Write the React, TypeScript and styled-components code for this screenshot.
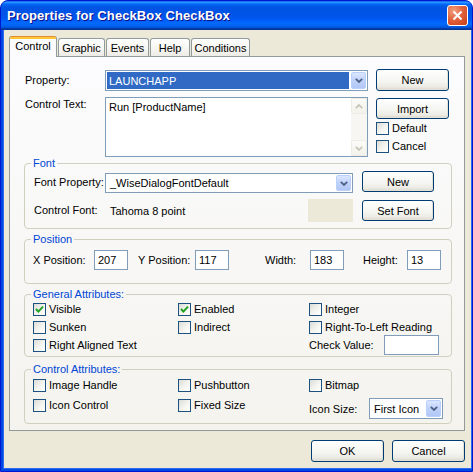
import React from 'react';
import styled, { createGlobalStyle } from 'styled-components';

const GlobalStyle = createGlobalStyle`
  html, body {
    margin: 0;
    padding: 0;
    background: #ffffff;
  }
  body {
    font-family: "Liberation Sans", Arial, sans-serif;
    font-size: 11px;
    color: #000000;
  }
  * {
    box-sizing: border-box;
  }
`;

const Window = styled.div`
  width: 473px;
  height: 472px;
  display: flex;
  flex-direction: column;
  background: #0047e5;
  border: 1px solid #0019cf;
  border-radius: 8px 8px 0 0;
  overflow: hidden;
`;

const TitleBar = styled.div`
  height: 29px;
  flex: none;
  display: flex;
  align-items: center;
  justify-content: space-between;
  padding: 0 4px 0 6px;
  background: linear-gradient(
    180deg,
    #0058ee 0%,
    #3593ff 4%,
    #288eff 6%,
    #127dff 8%,
    #036ffc 10%,
    #0262ee 14%,
    #0057e5 20%,
    #0054e3 24%,
    #0055eb 56%,
    #005bf5 66%,
    #026afe 76%,
    #0062ef 86%,
    #0052d6 92%,
    #0040ab 94%,
    #003092 100%
  );
`;

const TitleText = styled.span`
  font-family: "Liberation Sans", Arial, sans-serif;
  font-weight: bold;
  font-size: 13px;
  color: #ffffff;
  text-shadow: 1px 1px 0 #0f1089;
  letter-spacing: 0.1px;
`;

const CloseButton = styled.div`
  width: 21px;
  height: 21px;
  border: 1px solid #ffffff;
  border-radius: 3px;
  display: flex;
  align-items: center;
  justify-content: center;
  background: radial-gradient(circle at 30% 25%, #f0a080 0%, #e2643e 45%, #c63d15 100%);
`;

const Frame = styled.div`
  flex: 1;
  display: flex;
  padding: 0 2px 2px;
`;

const Client = styled.div`
  flex: 1;
  display: flex;
  flex-direction: column;
  background: #ece9d8;
  border: 1px solid #2a6dee;
  border-top: none;
  padding: 6px 6px 0 5px;
`;

const TabStrip = styled.div`
  display: flex;
  align-items: flex-end;
  gap: 1px;
  height: 21px;
  margin-bottom: -1px;
  position: relative;
  z-index: 1;
`;

const Tab = styled.div<{ $active?: boolean; $w: number }>`
  width: ${({ $w }) => $w}px;
  height: ${({ $active }) => ($active ? 21 : 18)}px;
  margin-bottom: ${({ $active }) => ($active ? 0 : 1)}px;
  display: flex;
  align-items: center;
  justify-content: center;
  padding-top: ${({ $active }) => ($active ? 1 : 0)}px;
  padding-bottom: ${({ $active }) => ($active ? 2 : 0)}px;
  border: 1px solid #919b9c;
  border-top: ${({ $active }) => ($active ? 'none' : '1px solid #919b9c')};
  border-bottom: none;
  border-radius: 3px 3px 0 0;
  background: ${({ $active }) =>
    $active
      ? 'linear-gradient(180deg, #e68b2c 0, #e68b2c 1px, #ffc83c 1px, #ffc83c 3px, #fcfcfe 3px)'
      : 'linear-gradient(180deg, #ffffff 0%, #f7f6f2 55%, #ecebe5 100%)'};
`;

const Panel = styled.div`
  display: flex;
  flex-direction: column;
  border: 1px solid #919b9c;
  background: linear-gradient(180deg, #fcfcfe 0%, #f4f3ee 100%);
  padding: 12px 12px 6px 14px;
`;

const TopGrid = styled.div`
  display: grid;
  grid-template-columns: 73px 263px 73px;
  grid-template-rows: 22px 60px;
  column-gap: 8px;
  row-gap: 6px;
`;

const FieldLabel = styled.div<{ $top?: boolean }>`
  padding-left: 1px;
  line-height: 13px;
  align-self: ${({ $top }) => ($top ? 'start' : 'center')};
  padding-top: ${({ $top }) => ($top ? 1 : 0)}px;
  white-space: nowrap;
`;

const Combo = styled.div<{ $h?: number }>`
  height: ${({ $h }) => $h ?? 20}px;
  display: flex;
  align-items: stretch;
  border: 1px solid #7f9db9;
  background: #ffffff;
`;

const ComboText = styled.div<{ $selected?: boolean }>`
  flex: 1;
  display: flex;
  align-items: center;
  margin: 1px;
  padding-left: ${({ $selected }) => ($selected ? 2 : 3)}px;
  background: ${({ $selected }) => ($selected ? '#316ac5' : 'transparent')};
  color: ${({ $selected }) => ($selected ? '#ffffff' : '#000000')};
  white-space: nowrap;
  overflow: hidden;
`;

const ComboButton = styled.div`
  width: 15px;
  margin: 1px;
  display: flex;
  align-items: center;
  justify-content: center;
  border: 1px solid #bad0fc;
  border-radius: 2px;
  background: linear-gradient(180deg, #dce7ff 0%, #c1d3fb 45%, #b2c7f7 100%);
`;

const MemoBox = styled.div`
  display: flex;
  border: 1px solid #7f9db9;
  background: #ffffff;
`;

const MemoText = styled.div`
  flex: 1;
  padding: 3px 3px;
  line-height: 13px;
`;

const ScrollBar = styled.div`
  width: 16px;
  display: flex;
  flex-direction: column;
  justify-content: space-between;
  background: #f7f6f2;
`;

const ScrollArrow = styled.div`
  height: 16px;
  display: flex;
  align-items: center;
  justify-content: center;
  border: 1px solid #eeede5;
  border-radius: 2px;
  background: linear-gradient(180deg, #fbfbf8 0%, #f3f2ec 100%);
`;

const SideColumn = styled.div`
  display: flex;
  flex-direction: column;
  padding-top: 1px;
`;

const Button = styled.div<{ $w?: number; $h?: number }>`
  width: ${({ $w }) => ($w ? `${$w}px` : '100%')};
  height: ${({ $h }) => $h ?? 22}px;
  display: flex;
  align-items: center;
  justify-content: center;
  border: 1px solid #003c74;
  border-radius: 3px;
  background: linear-gradient(180deg, #ffffff 0%, #f4f4f0 60%, #ebeae3 85%, #d8d3c8 100%);
  box-shadow: inset -1px -1px 0 #e3e0d5;
  flex: none;
`;

const CheckRow = styled.div<{ $h?: number }>`
  height: ${({ $h }) => $h ?? 18}px;
  display: flex;
  align-items: center;
  gap: 3px;
  white-space: nowrap;
`;

const CheckBox = styled.div`
  width: 13px;
  height: 13px;
  flex: none;
  display: flex;
  align-items: center;
  justify-content: center;
  border: 1px solid #1c5180;
  background: linear-gradient(135deg, #dcdcd7 0%, #f4f4f0 55%, #ffffff 100%);
`;

const GroupBox = styled.fieldset<{ $pad: string; $mt?: number }>`
  margin: ${({ $mt }) => $mt ?? 0}px 0 0 0;
  min-width: 0;
  padding: ${({ $pad }) => $pad};
  border: 1px solid #d0d0bf;
  border-radius: 4px;
`;

const Legend = styled.legend`
  margin-left: -2px;
  padding: 0 2px;
  line-height: 12px;
  color: #0046d5;
`;

const FontGrid = styled.div`
  display: grid;
  grid-template-columns: 63px 248px 72px;
  grid-template-rows: 22px 23px;
  column-gap: 9px;
  row-gap: 6px;
`;

const FontSample = styled.div`
  display: flex;
  align-items: center;
  justify-content: space-between;
  padding-left: 5px;
`;

const Swatch = styled.div`
  width: 45px;
  height: 23px;
  background: #ece9d8;
`;

const PositionRow = styled.div`
  display: flex;
  align-items: center;
  height: 20px;
`;

const InlineLabel = styled.span<{ $w: number; $ml?: number }>`
  width: ${({ $w }) => $w}px;
  margin-left: ${({ $ml }) => $ml ?? 0}px;
  flex: none;
  white-space: nowrap;
`;

const TextBox = styled.div<{ $w: number; $h?: number }>`
  width: ${({ $w }) => $w}px;
  height: ${({ $h }) => $h ?? 20}px;
  flex: none;
  display: flex;
  align-items: center;
  padding: 0 3px;
  border: 1px solid #7f9db9;
  background: #ffffff;
`;

const AttrGrid = styled.div<{ $rows: string }>`
  display: grid;
  grid-template-columns: 145px 131px 1fr;
  grid-template-rows: ${({ $rows }) => $rows};
  align-items: start;
`;

const AttrCell = styled.div<{ $mt?: number }>`
  display: flex;
  align-items: center;
  margin-top: ${({ $mt }) => $mt ?? 0}px;
  white-space: nowrap;
`;

const Footer = styled.div`
  display: flex;
  justify-content: flex-end;
  gap: 8px;
  padding-top: 9px;
`;

const Chevron: React.FC<{ color?: string; up?: boolean }> = ({ color = '#4d6185', up }) => (
  <svg width="8" height="5" viewBox="0 0 8 5" style={up ? { transform: 'rotate(180deg)' } : undefined}>
    <path d="M0.8 0.8 L4 4 L7.2 0.8" fill="none" stroke={color} strokeWidth="1.8" />
  </svg>
);

const Check: React.FC<{ label: string; checked?: boolean; h?: number }> = ({ label, checked, h }) => (
  <CheckRow $h={h}>
    <CheckBox>
      {checked && (
        <svg width="9" height="9" viewBox="0 0 9 9">
          <path d="M1 4 L3.4 6.6 L8 1.6" fill="none" stroke="#21a121" strokeWidth="2" />
        </svg>
      )}
    </CheckBox>
    <span>{label}</span>
  </CheckRow>
);

const Dropdown: React.FC<{ value: string; selected?: boolean; h?: number }> = ({ value, selected, h }) => (
  <Combo $h={h}>
    <ComboText $selected={selected}>{value}</ComboText>
    <ComboButton>
      <Chevron />
    </ComboButton>
  </Combo>
);

const tabs = [
  { label: 'Control', w: 48, active: true },
  { label: 'Graphic', w: 47 },
  { label: 'Events', w: 43 },
  { label: 'Help', w: 40 },
  { label: 'Conditions', w: 59 },
];

export default function App() {
  return (
    <>
      <GlobalStyle />
      <Window>
        <TitleBar>
          <TitleText>Properties for CheckBox CheckBox</TitleText>
          <CloseButton>
            <svg width="11" height="11" viewBox="0 0 11 11">
              <path d="M1.5 1.5 L9.5 9.5 M9.5 1.5 L1.5 9.5" stroke="#ffffff" strokeWidth="2" />
            </svg>
          </CloseButton>
        </TitleBar>
        <Frame>
          <Client>
            <TabStrip>
              {tabs.map((t) => (
                <Tab key={t.label} $w={t.w} $active={t.active}>
                  {t.label}
                </Tab>
              ))}
            </TabStrip>
            <Panel>
              <TopGrid>
                <FieldLabel>Property:</FieldLabel>
                <div style={{ alignSelf: 'end' }}>
                  <Dropdown value="LAUNCHAPP" selected h={21} />
                </div>
                <Button>New</Button>
                <FieldLabel $top>Control Text:</FieldLabel>
                <MemoBox>
                  <MemoText>Run [ProductName]</MemoText>
                  <ScrollBar>
                    <ScrollArrow>
                      <Chevron color="#c9c7ba" up />
                    </ScrollArrow>
                    <ScrollArrow>
                      <Chevron color="#c9c7ba" />
                    </ScrollArrow>
                  </ScrollBar>
                </MemoBox>
                <SideColumn>
                  <Button $h={21}>Import</Button>
                  <Check label="Default" />
                  <Check label="Cancel" />
                </SideColumn>
              </TopGrid>

              <GroupBox $pad="2px 8px 6px">
                <Legend>Font</Legend>
                <FontGrid>
                  <FieldLabel>Font Property:</FieldLabel>
                  <div style={{ alignSelf: 'end' }}>
                    <Dropdown value="_WiseDialogFontDefault" />
                  </div>
                  <Button $h={21}>New</Button>
                  <FieldLabel>Control Font:</FieldLabel>
                  <FontSample>
                    <span>Tahoma 8 point</span>
                    <Swatch />
                  </FontSample>
                  <div style={{ alignSelf: 'center' }}>
                    <Button $h={21}>Set Font</Button>
                  </div>
                </FontGrid>
              </GroupBox>

              <GroupBox $pad="5px 8px 13px" $mt={4}>
                <Legend>Position</Legend>
                <PositionRow>
                  <InlineLabel $w={61}>X Position:</InlineLabel>
                  <TextBox $w={34}>207</TextBox>
                  <InlineLabel $w={57} $ml={10}>Y Position:</InlineLabel>
                  <TextBox $w={34}>117</TextBox>
                  <InlineLabel $w={45} $ml={36}>Width:</InlineLabel>
                  <TextBox $w={34}>183</TextBox>
                  <InlineLabel $w={44} $ml={19}>Height:</InlineLabel>
                  <TextBox $w={34}>13</TextBox>
                </PositionRow>
              </GroupBox>

              <GroupBox $pad="0 8px 2px" $mt={4}>
                <Legend>General Attributes:</Legend>
                <AttrGrid $rows="18px 18px 18px">
                  <Check label="Visible" checked />
                  <Check label="Enabled" checked />
                  <Check label="Integer" />
                  <Check label="Sunken" />
                  <Check label="Indirect" />
                  <Check label="Right-To-Left Reading" />
                  <Check label="Right Aligned Text" />
                  <div />
                  <AttrCell $mt={-1}>
                    <InlineLabel $w={75}>Check Value:</InlineLabel>
                    <TextBox $w={55} />
                  </AttrCell>
                </AttrGrid>
              </GroupBox>

              <GroupBox $pad="0 8px 4px" $mt={6}>
                <Legend>Control Attributes:</Legend>
                <AttrGrid $rows="20px 24px">
                  <Check label="Image Handle" h={20} />
                  <Check label="Pushbutton" h={20} />
                  <Check label="Bitmap" h={20} />
                  <Check label="Icon Control" h={20} />
                  <Check label="Fixed Size" h={20} />
                  <AttrCell $mt={3}>
                    <InlineLabel $w={60}>Icon Size:</InlineLabel>
                    <div style={{ width: 74 }}>
                      <Dropdown value="First Icon" h={21} />
                    </div>
                  </AttrCell>
                </AttrGrid>
              </GroupBox>
            </Panel>
            <Footer>
              <Button $w={73}>OK</Button>
              <Button $w={73}>Cancel</Button>
            </Footer>
          </Client>
        </Frame>
      </Window>
    </>
  );
}
